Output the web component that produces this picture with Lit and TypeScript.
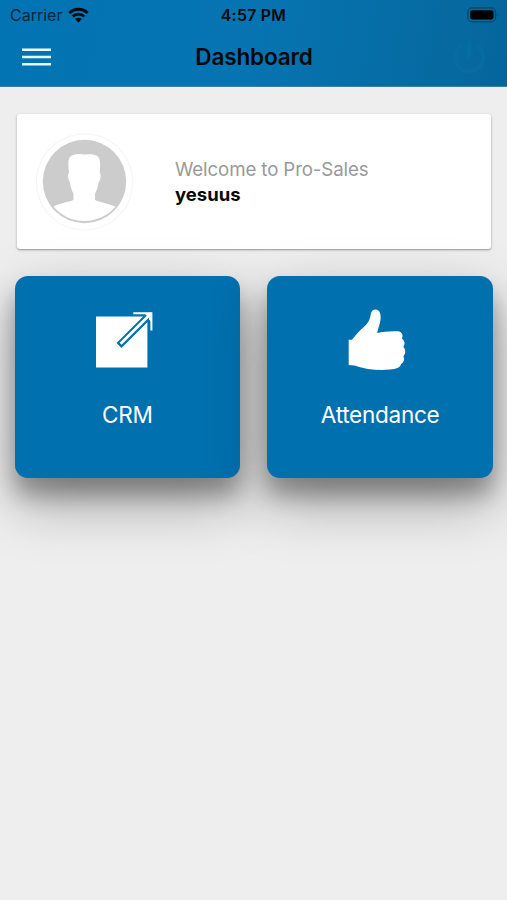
import { LitElement, html, svg, css } from "lit";
import { customElement, property } from "lit/decorators.js";

const exportIcon = svg`
  <path fill="#fff" d="M9 21.5H60.4V72.5H9Z"/>
  <path fill="none" stroke="#0070ae" stroke-width="7" d="M32 50.4L60.6 21.9"/>
  <path fill="none" stroke="#fff" stroke-width="2.8" d="M33.6 48.8L64 18.4"/>
  <path fill="#fff" d="M57 18H65V27.5L62 24.6V22L59.5 20.5Z"/>
  <path fill="none" stroke="#fff" stroke-width="2" d="M46.3 18.2H64.4V35.5"/>`;

const thumbIcon = svg`
  <path fill="#fff" d="M8.7 44.8H12C15 41 19 36 23.5 32.3C28.2 28.2 30 24.5 30.8 19C31.4 15.6 33.3 14.3 35.7 14.4C39.8 14.6 41 19 40.6 24C40.2 29 38 33 37.2 38C43 36.6 52 35.8 58 36.3C62.2 37 63.4 40 62 43.7C65 45.4 65.2 49.5 63.3 52C66 54.5 65.8 58.8 63.4 61.2C64.8 64.3 63.8 67.5 61 69C60.5 72.5 56 74 50 74.6C38 75.6 26 74.6 14.5 70.5L8.7 70Z"/>`;

@customElement("menu-tile")
class MenuTile extends LitElement {
  @property() label = "";
  @property({ attribute: false }) icon: unknown = null;

  static styles = css`
    :host {
      display: flex;
      flex-direction: column;
      align-items: center;
      box-sizing: border-box;
      height: 202px;
      padding-top: 19px;
      border-radius: 13px;
      background: #0070ae;
      box-shadow: 0 24px 56px rgba(0, 0, 0, 0.34), 0 17px 22px rgba(0, 0, 0, 0.28);
    }
    .icon { width: 76px; height: 90px; display: block; margin-right: 5px; }
    .label {
      margin-top: 15px;
      font-size: 22.6px;
      letter-spacing: -0.3px;
      line-height: 30px;
      color: #fff;
      white-space: nowrap;
    }
  `;

  render() {
    return html`
      <svg class="icon" viewBox="0 0 76 90">${this.icon}</svg>
      <div class="label">${this.label}</div>
    `;
  }
}

@customElement("app-root")
class AppRoot extends LitElement {
  static styles = css`
    :host {
      display: block;
      min-height: 900px;
      background: #eeeeee;
      font-family: Inter, "Liberation Sans", sans-serif;
      overflow: hidden;
    }
    svg { display: block; }
    .header {
      height: 87px;
      box-sizing: border-box;
      background: linear-gradient(100deg, #0274b3 0%, #0674b1 50%, #06699f 90%, #04659b 100%);
      border-bottom: 1px solid #3c7fa8;
      color: #05090d;
    }
    .status, .toolbar { display: grid; grid-template-columns: 1fr auto 1fr; align-items: center; }
    .status { height: 30px; padding: 0 8px 0 10px; }
    .carrier { display: flex; align-items: center; gap: 6px; font-size: 16px; color: #06263a; }
    .time { font-size: 15.8px; font-weight: 600; letter-spacing: 0.3px; margin-right: 2px; }
    .battery { justify-self: end; }
    .toolbar { height: 54px; padding: 0 21px 0 22px; }
    .title { font-size: 22.6px; font-weight: 600; letter-spacing: -0.2px; margin-bottom: 2px; }
    .power { justify-self: end; }
    .card {
      display: flex;
      align-items: center;
      height: 135px;
      box-sizing: border-box;
      margin: 27px 16px 0 17px;
      padding-left: 18px;
      background: #fff;
      border-radius: 3px;
      box-shadow: 0 1px 3px rgba(0, 0, 0, 0.28), 0 1px 1px rgba(0, 0, 0, 0.14);
    }
    .who { margin-left: 40px; padding-top: 1px; line-height: 24px; }
    .welcome { color: #999; font-size: 18.7px; letter-spacing: -0.12px; }
    .name { color: #080808; font-size: 18.5px; font-weight: 700; }
    .tiles {
      display: grid;
      grid-template-columns: 1fr 1fr;
      gap: 27px;
      margin: 27px 14px 0 14.5px;
    }
  `;

  render() {
    return html`
      <div class="header">
        <div class="status">
          <div class="carrier">
            <span>Carrier</span>
            <svg width="21" height="16" viewBox="0 0 21 16">
              <g fill="none" stroke="#020a10" stroke-width="2.8">
                <path d="M1.3 6A13.2 13.2 0 0 1 19.7 6"/>
                <path d="M4.7 9.5A8.3 8.3 0 0 1 16.3 9.5"/>
              </g>
              <path fill="#020a10" d="M7.2 12A4.7 4.7 0 0 1 13.8 12L10.5 15.4Z"/>
            </svg>
          </div>
          <div class="time">4:57 PM</div>
          <svg class="battery" width="32" height="16" viewBox="0 0 32 16">
            <rect x="0.9" y="0.8" width="27.6" height="14" rx="4.4" fill="none" stroke="#05496e" stroke-width="1.3"/>
            <rect x="3.2" y="3.2" width="23.3" height="9.2" rx="2" fill="#000"/>
            <path d="M30 5.8Q31.6 7.8 30 9.8Z" fill="#05496e"/>
          </svg>
        </div>
        <div class="toolbar">
          <svg width="30" height="18" viewBox="0 0 30 18">
            <path d="M0 1.7H29M0 9H29M0 16.3H29" stroke="#eafaff" stroke-width="2.6"/>
          </svg>
          <div class="title">Dashboard</div>
          <svg class="power" width="34" height="34" viewBox="0 0 34 34" fill="none" stroke="#076ca4" stroke-width="4" stroke-linecap="round">
            <path d="M8 6.5A14 14 0 1 0 26 6.5M17 3V17"/>
          </svg>
        </div>
      </div>
      <div class="card">
        <svg width="100" height="104" viewBox="0 0 100 104">
          <circle cx="49.5" cy="52" r="48" fill="none" stroke="#f5f5f5" stroke-width="1.2"/>
          <circle cx="49.5" cy="51.5" r="41.7" fill="#cccccc"/>
          <path fill="#fff" d="M18.5 76.5C25 73 36 71.5 38.5 70V64C36.5 60 35.5 56 34.8 52C32.6 50 32.8 44 34 42.8C33.2 36 32.7 29.5 35 27C37 24.5 44 23 50 24.5C57 23.5 63.5 24.5 64.7 30C65.5 35 65 38 64.8 42.8C66.5 45 65.5 50 63.5 52.5C63 57 61.5 61 60 64V70C64 72 74 73.5 80.5 76.8A40.6 40.6 0 0 1 18.5 76.5Z"/>
        </svg>
        <div class="who">
          <div class="welcome">Welcome to Pro-Sales</div>
          <div class="name">yesuus</div>
        </div>
      </div>
      <div class="tiles">
        <menu-tile .label=${"CRM"} .icon=${exportIcon}></menu-tile>
        <menu-tile .label=${"Attendance"} .icon=${thumbIcon}></menu-tile>
      </div>
    `;
  }
}
